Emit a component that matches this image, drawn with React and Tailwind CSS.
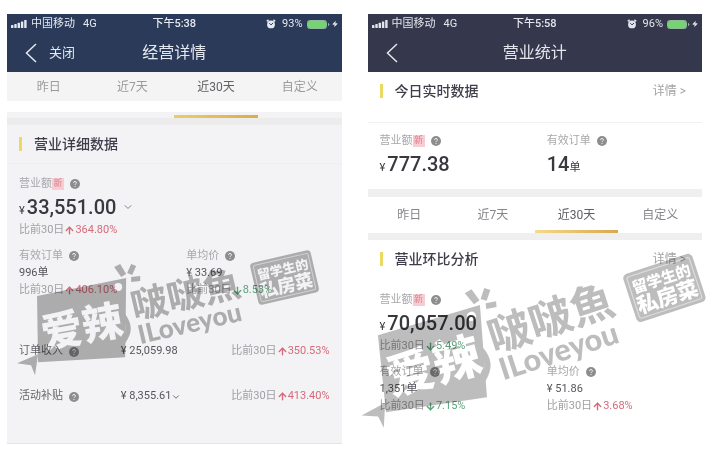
import { ChevronDown, ArrowUp, ArrowDown, Zap } from 'lucide-react'

const TABS = ['昨日', '近7天', '近30天', '自定义']

const ROWS = [
  { name: '订单收入', value: '25,059.98', change: '350.53%' },
  { name: '活动补贴', value: '8,355.61', change: '413.40%', more: true },
]

export default function App() {
  return (
    <main className="flex items-start gap-[26px] bg-white pt-3.5 pr-[18px] pb-5 pl-[7px] font-['Roboto','Noto_Sans_CJK_SC',sans-serif] text-[11px] text-[#55555c]">
      <DetailPhone />
      <StatsPhone />
    </main>
  )
}

function DetailPhone() {
  return (
    <section className="relative min-w-0 flex-1">
      <header className="bg-[#2b3a59] text-[#e4e8f0]">
        <StatusBar time="下午5:38" battery="93%" />
        <NavBar title="经营详情" close />
      </header>
      <Tabs className="h-[29px] bg-[#f4f4f4] text-[#9b9b9f]" />

      <div className="mt-[11px] border-b border-[#e4e3e5] bg-[#f3f2f4] pb-6">
        <div className="grid h-1.5 grid-cols-4 items-end">
          <span className="col-start-3 h-[3px] bg-linear-to-r from-[#eccb6c] to-[#dcae45]" />
        </div>
        <div className="h-[7px] bg-[#ececec]" />
        <Title text="营业详细数据" />

        <div className="border-t border-[#efeef0] pt-3 pl-3">
          <Label text="营业额" badge />
          <Amount value="33,551.00" more />
          <Change value="364.80%" up />
        </div>
        <div className="mt-2.5 grid grid-cols-2">
          <Metric label="有效订单" value="996单" change="406.10%" up />
          <Metric label="单均价" value="¥ 33.69" change="8.53%" />
        </div>

        <table className="mt-[31px] w-full">
          <tbody>
            {ROWS.map((row) => (
              <tr key={row.name} className="h-[45px]">
                <th scope="row" className="w-[34%] pl-3 text-left font-normal"><Label text={row.name} dark /></th>
                <td>
                  <span className="flex items-center">
                    ¥ {row.value}
                    {row.more && <ChevronDown size={10} />}
                  </span>
                </td>
                <td className="pr-3"><div className="flex justify-end"><Change value={row.change} up /></div></td>
              </tr>
            ))}
          </tbody>
        </table>
      </div>
      <Watermark className="pointer-events-none absolute top-[236px] left-0 w-full mix-blend-multiply" />
    </section>
  )
}

function StatsPhone() {
  return (
    <section className="relative min-w-0 flex-1">
      <header className="bg-[#35384d] text-[#e4e5ec]">
        <StatusBar time="下午5:58" battery="96%" />
        <NavBar title="营业统计" />
      </header>
      <Title text="今日实时数据" link />
      <div className="mt-3 grid grid-cols-2 border-t border-[#f1f1f1] pt-2.5 pb-2.5">
        <div className="pl-3">
          <Label text="营业额" badge />
          <Amount value="777.38" />
        </div>
        <div className="pl-3">
          <Label text="有效订单" />
          <Amount value="14" unit="单" />
        </div>
      </div>

      <div className="h-2 bg-[#efeff0]" />
      <Tabs className="h-9 text-[#85858a]" underline />
      <div className="h-[7px] bg-[#efeff0]" />

      <Title text="营业环比分析" link />
      <div className="pt-3.5 pl-3">
        <Label text="营业额" badge />
        <Amount value="70,057.00" />
        <Change value="5.49%" />
      </div>
      <div className="mt-2.5 grid grid-cols-2">
        <Metric label="有效订单" value="1,351单" change="7.15%" />
        <Metric label="单均价" value="¥ 51.86" change="3.68%" up />
      </div>
      <Watermark tilted className="pointer-events-none absolute top-[236px] left-0 w-full mix-blend-multiply" />
    </section>
  )
}

function StatusBar({ time, battery }) {
  return (
    <div className="grid h-5 grid-cols-[1fr_auto_1fr] items-center px-1">
      <div className="flex items-center gap-1">
        <svg width="16" height="8" viewBox="0 0 16 8" fill="currentColor">
          <rect x="0" y="5" width="2.4" height="3" rx=".5" />
          <rect x="3.3" y="4" width="2.4" height="4" rx=".5" />
          <rect x="6.6" y="2.8" width="2.4" height="5.2" rx=".5" />
          <rect x="9.9" y="1.4" width="2.4" height="6.6" rx=".5" />
          <rect x="13.2" y="0" width="2.4" height="8" rx=".5" />
        </svg>
        <span>中国移动</span>
        <span className="ml-1">4G</span>
      </div>
      <span className="font-medium">{time}</span>
      <div className="flex items-center justify-end gap-1">
        <svg width="10" height="10" viewBox="0 0 10 10">
          <circle cx="5" cy="5.4" r="3.9" fill="currentColor" />
          <path d="M.8 2.400L2.600.9M9.200 2.400L7.400.9" stroke="currentColor" strokeWidth="1.400" />
          <path d="M3.300 4.200L5 5.900L7 4" fill="none" stroke="#35384d" />
        </svg>
        <span className="ml-0.5">{battery}</span>
        <svg width="23" height="9" viewBox="0 0 23 9">
          <rect x=".5" y=".5" width="19" height="8" rx="2" fill="none" stroke="#8fb798" />
          <rect x="1" y="1" width="18" height="7" rx="1.200" fill="#74d372" />
          <path d="M21 3v3c1-.3 1.400-.8 1.400-1.500S22 3.300 21 3z" fill="#8fb798" />
        </svg>
        <Zap size={6} fill="currentColor" className="-ml-0.5" />
      </div>
    </div>
  )
}

function NavBar({ title, close }) {
  return (
    <div className="grid h-[38px] grid-cols-[1fr_auto_1fr] items-center">
      <button type="button" aria-label="返回" className="flex items-center gap-3 pl-[18px] text-[13px]">
        <svg width="12" height="20" viewBox="0 0 12 20" fill="none" stroke="currentColor" strokeWidth="1.500">
          <path d="M11 1L1.500 10L11 19" />
        </svg>
        {close && '关闭'}
      </button>
      <h1 className="text-base">{title}</h1>
    </div>
  )
}

function Tabs({ className, underline }) {
  return (
    <nav className={`grid grid-cols-4 text-xs ${className}`}>
      {TABS.map((tab) => {
        const active = tab === '近30天'
        return (
          <button key={tab} type="button" className={`relative ${active ? 'text-[#606066]' : ''}`}>
            {tab}
            {active && underline && (
              <span className="absolute inset-x-0 bottom-0 h-[3px] bg-linear-to-r from-[#f5d98c] to-[#d9a94c]" />
            )}
          </button>
        )
      })}
    </nav>
  )
}

function Title({ text, link }) {
  return (
    <div className="flex h-[38px] items-center px-3">
      <span className="h-3.5 w-[3px] bg-[#ecd963]" />
      <h2 className="ml-3 text-sm font-medium text-[#3e3e4a]">{text}</h2>
      {link && <a href="#detail" className="ml-auto pr-1 text-xs text-[#a3a3a6]">详情 &gt;</a>}
    </div>
  )
}

function Label({ text, badge, dark }) {
  return (
    <div className={`flex h-4 items-center ${dark ? 'text-[#66666b]' : 'text-[#a8a8ac]'}`}>
      {text}
      {badge && (
        <span className="flex size-3 items-center justify-center bg-[#f7ccd2] text-[9px] text-[#dc7f8b]">新</span>
      )}
      <svg className="ml-1.5" width="10" height="10" viewBox="0 0 10 10">
        <circle cx="5" cy="5" r="5" fill="#8d8d90" />
        <path d="M3.500 3.900C3.500 2 6.500 2 6.500 3.900C6.500 4.900 5 4.900 5 6M5 7v1" fill="none" stroke="#eee" />
      </svg>
    </div>
  )
}

function Amount({ value, unit, more }) {
  return (
    <div className="flex h-[30px] items-center text-[#38383f]">
      <span className="flex items-baseline">
        {!unit && <span className="mr-0.5 text-[11px]">¥</span>}
        <span className="text-xl font-medium">{value}</span>
        {unit && <span className="text-[11px]">{unit}</span>}
      </span>
      {more && <ChevronDown size={12} className="ml-1.5 text-[#85858a]" />}
    </div>
  )
}

function Change({ value, up }) {
  const Icon = up ? ArrowUp : ArrowDown
  return (
    <div className="flex h-4 items-center text-[#a0a0a4]">
      比前30日
      <span className={`flex items-center ${up ? 'text-[#d66b7b]' : 'text-[#5da37c]'}`}>
        <Icon size={11} strokeWidth={3} />
        {value}
      </span>
    </div>
  )
}

function Metric({ label, value, change, up }) {
  return (
    <div className="pl-3">
      <Label text={label} />
      <p className="leading-[18px]">{value}</p>
      <Change value={change} up={up} />
    </div>
  )
}

function Watermark({ tilted, className }) {
  return (
    <svg viewBox="0 0 334 190" className={className} overflow="visible" aria-hidden="true">
      {/* drawn around the centre of the card at 74,73 */}
      <g transform={tilted ? 'translate(64 112) rotate(-5.100) scale(1.170) translate(-74 -73)' : undefined} fill={tilted ? '#bdbdbd' : '#b5b5b5'}>
        <path d="M30 46L119 28L118 107L31 112z" />
        <path d="M10 113L31 104L28 125L24 115z" />
        <path d="M107 17l6-3l6 10l-5 3zM120 23l4-9l5 2l-4 9zM124 27l9-1v5l-9 1z" />
        <circle cx="111" cy="37" r="4" fill="#fff" />
        <g fontFamily="'Noto Sans CJK SC', sans-serif" fontWeight="900">
          <path d="M118 64c7 10 8 18 0 29l-2-3c3-8 3-15 0-24z" />
          <text transform="translate(37 98) rotate(-10)" fontSize="41" fill="#fff">爱辣</text>
          <text transform="translate(127 70) rotate(-13)" fontSize="37" fontWeight="700">啵啵魚</text>
          <rect x="-31" y="-21" width="62" height="43" rx="4" transform="translate(277 27) rotate(-13)" />
          <rect x="-28" y="-18" width="56" height="37" rx="2" transform="translate(277 27) rotate(-13)" fill="none" stroke="#ddd" strokeWidth="1" />
          <text transform="translate(277 27) rotate(-13)" textAnchor="middle" fill="#fff">
            <tspan x="0" y="-3" fontSize="13">留学生的</tspan>
            <tspan x="0" y="15" fontSize="18">私房菜</tspan>
          </text>
        </g>
        <text transform="translate(133 94) rotate(-13)" fontFamily="Lato, sans-serif" fontWeight="900" fontSize="26">ILoveyou</text>
      </g>
    </svg>
  )
}
